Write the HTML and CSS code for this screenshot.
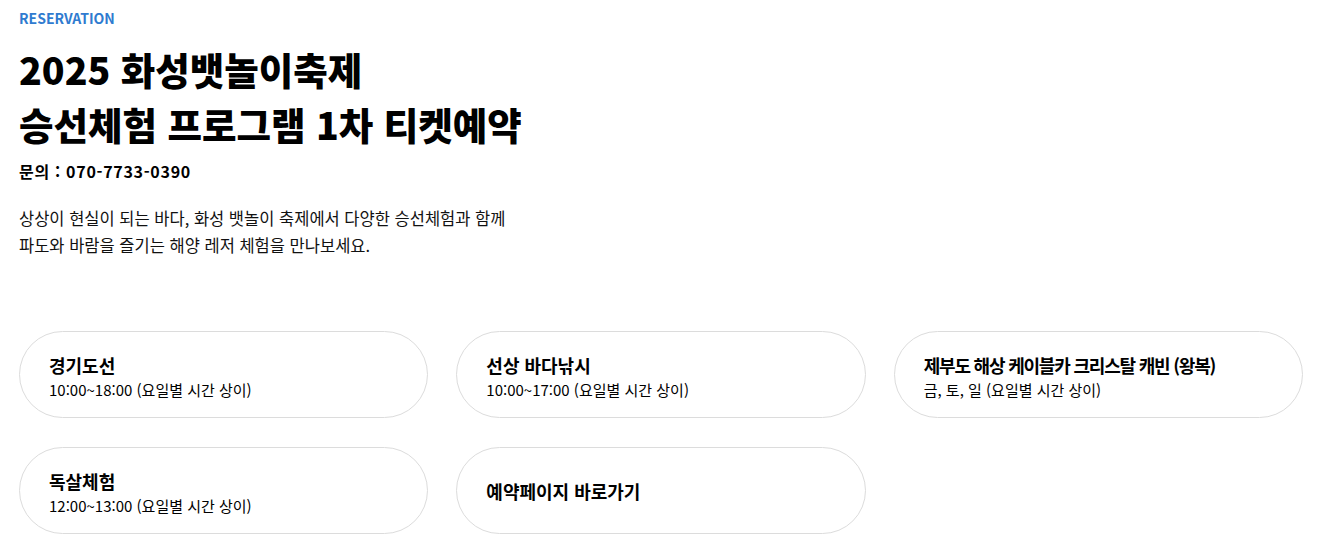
FILE: index.html
```html
<!DOCTYPE html>
<html lang="ko">
<head>
<meta charset="utf-8">
<title>2025 화성뱃놀이축제 승선체험 프로그램 1차 티켓예약</title>
<link rel="stylesheet" href="styles.css">
</head>
<body>
<main class="page">
  <header class="intro">
    <p class="eyebrow">RESERVATION</p>
    <h1 class="title">2025 화성뱃놀이축제<br>승선체험 프로그램 1차 티켓예약</h1>
    <p class="contact">문의 : 070-7733-0390</p>
    <p class="desc">상상이 현실이 되는 바다, 화성 뱃놀이 축제에서 다양한 승선체험과 함께<br>파도와 바람을 즐기는 해양 레저 체험을 만나보세요.</p>
  </header>
  <section class="cards">
    <a class="card" href="#">
      <strong class="card-title">경기도선</strong>
      <span class="card-sub">10:00~18:00 (요일별 시간 상이)</span>
    </a>
    <a class="card" href="#">
      <strong class="card-title">선상 바다낚시</strong>
      <span class="card-sub">10:00~17:00 (요일별 시간 상이)</span>
    </a>
    <a class="card" href="#">
      <strong class="card-title card-title-long">제부도 해상 케이블카 크리스탈 캐빈 (왕복)</strong>
      <span class="card-sub">금, 토, 일 (요일별 시간 상이)</span>
    </a>
    <a class="card" href="#">
      <strong class="card-title">독살체험</strong>
      <span class="card-sub">12:00~13:00 (요일별 시간 상이)</span>
    </a>
    <a class="card card-single" href="#">
      <strong class="card-title">예약페이지 바로가기</strong>
    </a>
  </section>
</main>
</body>
</html>
```
FILE: styles.css
```css
* { box-sizing: border-box; }
html, body { margin: 0; padding: 0; background: #fff; }
body {
  font-family: "Noto Sans CJK KR", "Noto Sans", sans-serif;
  color: #000;
}
.page {
  padding: 8px 19px 0 19px;
  width: 1322px;
}
.intro p, .intro h1 { margin: 0; }
.eyebrow {
  color: #2f7bd0;
  font-size: 14px;
  font-weight: 700;
  line-height: 20px;
}
.title {
  margin-top: 13px !important;
  font-size: 37.5px;
  font-weight: 900;
  line-height: 55px;
  letter-spacing: 0;
}
.contact {
  margin-top: 8px !important;
  font-size: 16px;
  font-weight: 700;
  line-height: 24px;
  letter-spacing: 0.7px;
}
.desc {
  margin-top: 22px !important;
  font-size: 16.5px;
  font-weight: 400;
  line-height: 27px;
  color: #111;
}
.cards {
  margin-top: 72px;
  display: grid;
  grid-template-columns: repeat(3, 1fr);
  column-gap: 28px;
  row-gap: 29px;
  width: 1284px;
}
.card {
  height: 87px;
  border: 1px solid #dcdcdc;
  border-radius: 44px;
  padding: 4px 29px 0;
  display: flex;
  flex-direction: column;
  justify-content: center;
  text-decoration: none;
  color: #000;
}
.card-single { padding-top: 1px; }
.card-title {
  font-size: 18px;
  font-weight: 700;
  line-height: 25px;
  letter-spacing: 0;
}
.card-title-long { letter-spacing: -1.2px; }
.card-sub {
  margin-top: 1px;
  font-size: 15px;
  font-weight: 400;
  line-height: 22px;
}
```
